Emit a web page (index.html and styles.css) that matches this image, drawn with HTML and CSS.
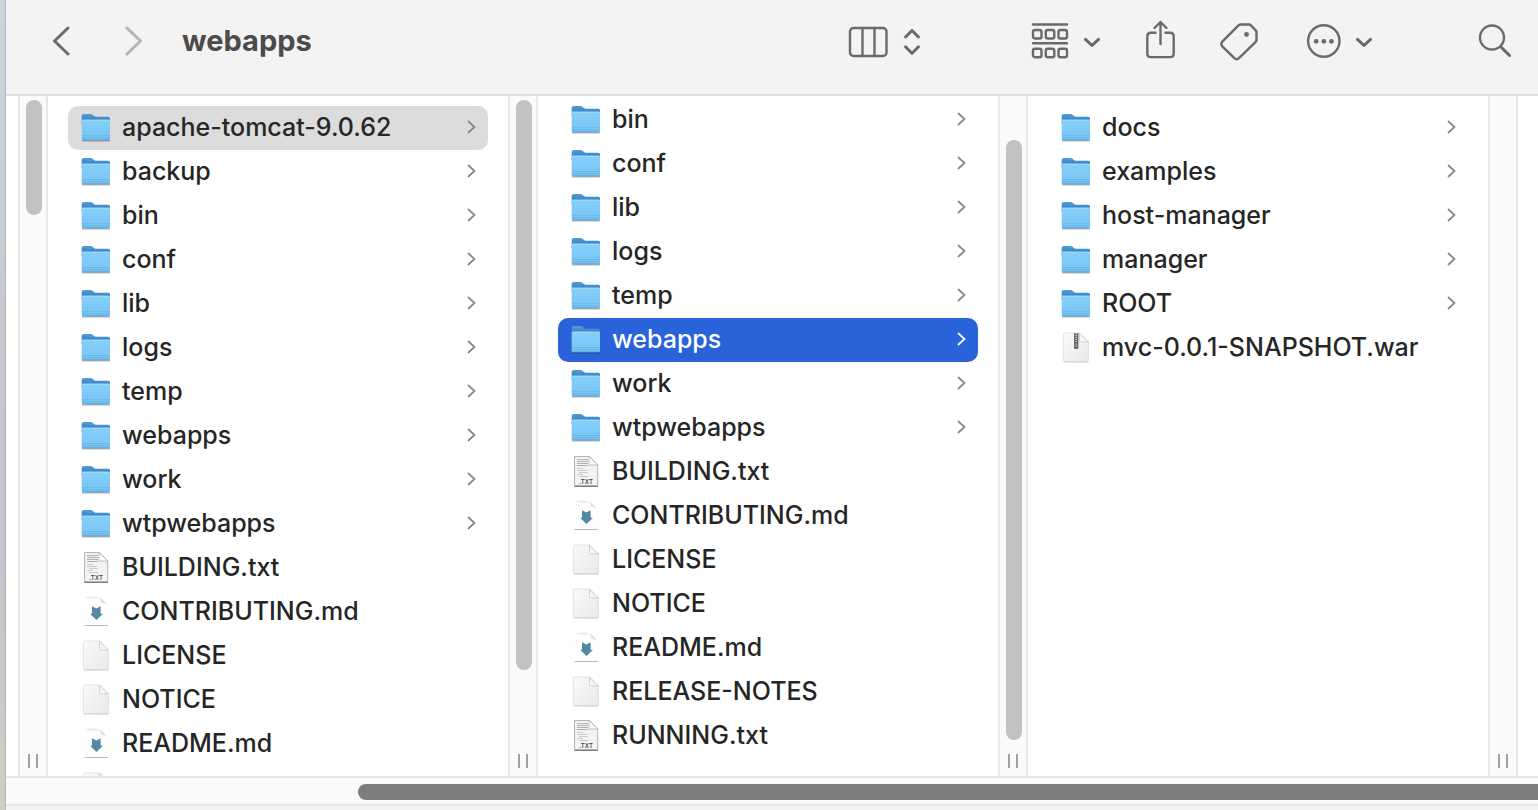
FILE: index.html
```html
<!DOCTYPE html>
<html lang="en">
<head>
<meta charset="utf-8">
<title>webapps</title>
<link rel="stylesheet" href="styles.css">
</head>
<body>
<svg class="sprites" width="0" height="0" aria-hidden="true">
  <defs>
    <linearGradient id="g-back" x1="0" y1="0" x2="0" y2="1"><stop offset="0" stop-color="#4f9fdc"/><stop offset="1" stop-color="#2c6fb8"/></linearGradient>
    <linearGradient id="g-front" x1="0" y1="0" x2="0" y2="1"><stop offset="0" stop-color="#86cffa"/><stop offset="1" stop-color="#76c3f3"/></linearGradient>
    <linearGradient id="g-page" x1="0" y1="0" x2="1" y2="1"><stop offset="0" stop-color="#fafafa"/><stop offset="1" stop-color="#e9e9e9"/></linearGradient>
    <linearGradient id="g-fold" x1="0" y1="1" x2="1" y2="0"><stop offset="0" stop-color="#ffffff"/><stop offset="1" stop-color="#e2e2e2"/></linearGradient>
  </defs>
  <symbol id="folder" viewBox="0 0 32 32">
    <path d="M2 28h28v1.600H2z" fill="#000" opacity=".25"/>
    <path d="M1.700 4q0-2 2-2h6.800q1.200 0 2 .8l1.500 1.300q.8.700 2 .7h12.300q1.700 0 1.700 1.700V12H1.700z" fill="url(#g-back)"/>
    <path d="M1.700 9q0-1.200 1.300-1.200h25.800q1.200 0 1.200 1.200v17.800q0 1.500-1.500 1.500H3.200q-1.500 0-1.500-1.500z" fill="url(#g-front)"/>
    <path d="M2.200 8.200h27.300" stroke="#a5dcfc" stroke-width="1"/>
    <path d="M1.900 23.500h28M1.900 25.500h28" stroke="#5fb0e4" stroke-width=".6"/>
    <path d="M2.400 28h27" stroke="#4688ba" stroke-width=".7"/>
  </symbol>
  <symbol id="page" viewBox="0 0 32 32">
    <path d="M5 1h14.500L28.500 10v18q0 1.700-1.700 1.700H5q-1.700 0-1.700-1.700V2.700Q3.300 1 5 1z" fill="url(#g-page)" stroke="#dcdcdc" stroke-width=".8"/>
    <path d="M4 30h24.500" stroke="#c6c6c6" stroke-width=".8"/>
    <path d="M19.500 1L28.500 10h-7.500q-1.500 0-1.500-1.500z" fill="url(#g-fold)" stroke="#c8c8c8" stroke-width=".8"/>
  </symbol>
  <symbol id="txt" viewBox="0 0 32 32">
    <path d="M4.500.5h15L27.700 9v21H4.500z" fill="#f3f3f3" stroke="#b4b4b4" stroke-width="1"/>
    <path d="M4.500 30.300h23.300" stroke="#7e7e7e" stroke-width="1.400"/>
    <path d="M7 3.500h11M7 5.500h11M7 7.500h11M7 9.500h11" stroke="#b0b0b0" stroke-width="1.100"/>
    <path d="M7 12.500h6M7 14.500h10M9 16.500h9M7 18.500h6M9 20.500h9" stroke="#cbcbcb" stroke-width="1"/>
    <path d="M19 .5L27.700 9H19z" fill="#fff" stroke="#b0b0b0" stroke-width=".8"/>
  </symbol>
  <symbol id="md" viewBox="0 0 32 32">
    <path d="M5 .5h12q3 0 3.500 4 .5 3 6.500 5.500v19.500H5z" fill="#fefefe"/>
    <path d="M5 .6h12l2 2.400H9z" fill="#ededed"/>
    <path d="M17.500.8Q24 3 27 9.500q-2-2.500-6-3 0-4-3.500-5.700z" fill="#e0e0e0"/>
    <path d="M4.500 29.500h23.500" stroke="#bdbdbd" stroke-width="1"/>
    <path d="M12 10.200l4.300 2.200 4.300-2.200v7.600H23L16.500 24 10 17.800h2z" fill="#5587a6"/>
  </symbol>
  <symbol id="zip" viewBox="0 0 32 32">
    <use href="#page"/>
    <path d="M14 1h4.400v15q0 1-1 1H15q-1 0-1-1z" fill="#666a70"/>
    <path d="M16.200 1v9" stroke="#c9ccd0" stroke-width="1.600" stroke-dasharray="1 1"/>
    <path d="M16.200 11.500v3.500" stroke="#a9adb3" stroke-width="1.200"/>
  </symbol>
  <symbol id="more" viewBox="0 0 10 16"><path d="M2.500 2.500L8.500 8l-6 5.500" fill="none" stroke="currentColor" stroke-width="1.700" stroke-linecap="round"/></symbol>
  <symbol id="down" viewBox="0 0 18 42"><path d="M2.500 19.300L9 25.500l6.500-6.200" fill="none" stroke="currentColor" stroke-width="3" stroke-linecap="round" stroke-linejoin="round"/></symbol>
</svg>

<div class="window">
  <header class="toolbar">
    <button class="tool back" aria-label="Back"><svg width="18" height="42" viewBox="0 0 18 42"><path d="M16 8L2.500 21 16 34"/></svg></button>
    <button class="tool forward" aria-label="Forward"><svg width="18" height="42" viewBox="0 0 18 42"><path d="M2 8l13.500 13L2 34"/></svg></button>
    <h1 class="title">webapps</h1>
    <button class="tool view" aria-label="View as columns">
      <svg width="40" height="42" viewBox="0 0 40 42"><rect x="2" y="8" width="36.500" height="28" rx="3.500"/><path d="M14.500 8v28M26.500 8v28"/></svg>
      <svg width="18" height="42" viewBox="0 0 18 42"><path class="bold" d="M2.500 17L9 10.500l6.500 6.500M2.500 26.800L9 33.300l6.500-6.500"/></svg>
    </button>
    <button class="tool group" aria-label="Group items">
      <svg width="38" height="42" viewBox="0 0 38 42"><path d="M2 4.500h34M2 23.200h34"/><rect x="2" y="10" width="8.500" height="8.500" rx="2"/><rect x="14.800" y="10" width="8.500" height="8.500" rx="2"/><rect x="27.500" y="10" width="8.500" height="8.500" rx="2"/><rect x="2" y="28.800" width="8.500" height="8.500" rx="2"/><rect x="14.800" y="28.800" width="8.500" height="8.500" rx="2"/><rect x="27.500" y="28.800" width="8.500" height="8.500" rx="2"/></svg>
      <svg width="18" height="42"><use href="#down"/></svg>
    </button>
    <button class="tool share" aria-label="Share"><svg width="32" height="42" viewBox="0 0 32 42"><path d="M10.500 12.700H6q-3.700 0-3.700 3.700v17q0 3.700 3.700 3.700h19q3.700 0 3.700-3.700v-17q0-3.700-3.700-3.700h-4.500M15.500 24V2.500M9.500 8l6-6 6 6"/></svg></button>
    <button class="tool tag" aria-label="Edit tags"><svg width="40" height="42" viewBox="0 0 40 42"><path d="M21.500 4.500h8.500q1 0 1.700.7l5 5.200q.8.800.8 1.800V20q0 1-.8 1.800L20 38.200q-2.300 2-4.600 0L3.300 26.300q-2-2.300 0-4.600L19.700 5.200q.8-.7 1.800-.7z"/><circle class="dot" cx="27.500" cy="14.500" r="2.400"/></svg></button>
    <button class="tool actions" aria-label="More actions">
      <svg width="36" height="42" viewBox="0 0 36 42"><circle cx="17.800" cy="21" r="15.700"/><circle class="dot" cx="10.200" cy="21.300" r="2.400"/><circle class="dot" cx="17.800" cy="21.300" r="2.400"/><circle class="dot" cx="25.400" cy="21.300" r="2.400"/></svg>
      <svg width="18" height="42"><use href="#down"/></svg>
    </button>
    <button class="tool search" aria-label="Search"><svg width="34" height="42" viewBox="0 0 34 42"><circle cx="14" cy="17.500" r="12"/><path class="bold" d="M23 27l8.500 8.500"/></svg></button>
  </header>

  <main class="browser">
    <div class="edge"></div>
    <div class="gutter"><div class="track"><div class="thumb" style="height:18%"></div></div><div class="grip"></div></div>
    <ul class="column">
      <li><button class="row current"><svg class="icon"><use href="#folder"/></svg><span class="name">apache-tomcat-9.0.62</span><svg class="chev"><use href="#more"/></svg></button></li>
      <li><button class="row"><svg class="icon"><use href="#folder"/></svg><span class="name">backup</span><svg class="chev"><use href="#more"/></svg></button></li>
      <li><button class="row"><svg class="icon"><use href="#folder"/></svg><span class="name">bin</span><svg class="chev"><use href="#more"/></svg></button></li>
      <li><button class="row"><svg class="icon"><use href="#folder"/></svg><span class="name">conf</span><svg class="chev"><use href="#more"/></svg></button></li>
      <li><button class="row"><svg class="icon"><use href="#folder"/></svg><span class="name">lib</span><svg class="chev"><use href="#more"/></svg></button></li>
      <li><button class="row"><svg class="icon"><use href="#folder"/></svg><span class="name">logs</span><svg class="chev"><use href="#more"/></svg></button></li>
      <li><button class="row"><svg class="icon"><use href="#folder"/></svg><span class="name">temp</span><svg class="chev"><use href="#more"/></svg></button></li>
      <li><button class="row"><svg class="icon"><use href="#folder"/></svg><span class="name">webapps</span><svg class="chev"><use href="#more"/></svg></button></li>
      <li><button class="row"><svg class="icon"><use href="#folder"/></svg><span class="name">work</span><svg class="chev"><use href="#more"/></svg></button></li>
      <li><button class="row"><svg class="icon"><use href="#folder"/></svg><span class="name">wtpwebapps</span><svg class="chev"><use href="#more"/></svg></button></li>
      <li><button class="row"><svg class="icon"><use href="#txt"/><text x="16" y="28" class="txt-tag">.TXT</text></svg><span class="name">BUILDING.txt</span></button></li>
      <li><button class="row"><svg class="icon"><use href="#md"/></svg><span class="name">CONTRIBUTING.md</span></button></li>
      <li><button class="row"><svg class="icon"><use href="#page"/></svg><span class="name">LICENSE</span></button></li>
      <li><button class="row"><svg class="icon"><use href="#page"/></svg><span class="name">NOTICE</span></button></li>
      <li><button class="row"><svg class="icon"><use href="#md"/></svg><span class="name">README.md</span></button></li>
      <li><button class="row" aria-label="Next file"><svg class="icon"><use href="#page"/></svg></button></li>
    </ul>
    <div class="gutter"><div class="track"><div class="thumb" style="height:89%"></div></div><div class="grip"></div></div>
    <ul class="column scrolled">
      <li><button class="row"><svg class="icon"><use href="#folder"/></svg><span class="name">bin</span><svg class="chev"><use href="#more"/></svg></button></li>
      <li><button class="row"><svg class="icon"><use href="#folder"/></svg><span class="name">conf</span><svg class="chev"><use href="#more"/></svg></button></li>
      <li><button class="row"><svg class="icon"><use href="#folder"/></svg><span class="name">lib</span><svg class="chev"><use href="#more"/></svg></button></li>
      <li><button class="row"><svg class="icon"><use href="#folder"/></svg><span class="name">logs</span><svg class="chev"><use href="#more"/></svg></button></li>
      <li><button class="row"><svg class="icon"><use href="#folder"/></svg><span class="name">temp</span><svg class="chev"><use href="#more"/></svg></button></li>
      <li><button class="row selected"><svg class="icon"><use href="#folder"/></svg><span class="name">webapps</span><svg class="chev"><use href="#more"/></svg></button></li>
      <li><button class="row"><svg class="icon"><use href="#folder"/></svg><span class="name">work</span><svg class="chev"><use href="#more"/></svg></button></li>
      <li><button class="row"><svg class="icon"><use href="#folder"/></svg><span class="name">wtpwebapps</span><svg class="chev"><use href="#more"/></svg></button></li>
      <li><button class="row"><svg class="icon"><use href="#txt"/><text x="16" y="28" class="txt-tag">.TXT</text></svg><span class="name">BUILDING.txt</span></button></li>
      <li><button class="row"><svg class="icon"><use href="#md"/></svg><span class="name">CONTRIBUTING.md</span></button></li>
      <li><button class="row"><svg class="icon"><use href="#page"/></svg><span class="name">LICENSE</span></button></li>
      <li><button class="row"><svg class="icon"><use href="#page"/></svg><span class="name">NOTICE</span></button></li>
      <li><button class="row"><svg class="icon"><use href="#md"/></svg><span class="name">README.md</span></button></li>
      <li><button class="row"><svg class="icon"><use href="#page"/></svg><span class="name">RELEASE-NOTES</span></button></li>
      <li><button class="row"><svg class="icon"><use href="#txt"/><text x="16" y="28" class="txt-tag">.TXT</text></svg><span class="name">RUNNING.txt</span></button></li>
    </ul>
    <div class="gutter"><div class="track at-end"><div class="thumb" style="height:93.750%"></div></div><div class="grip"></div></div>
    <ul class="column">
      <li><button class="row"><svg class="icon"><use href="#folder"/></svg><span class="name">docs</span><svg class="chev"><use href="#more"/></svg></button></li>
      <li><button class="row"><svg class="icon"><use href="#folder"/></svg><span class="name">examples</span><svg class="chev"><use href="#more"/></svg></button></li>
      <li><button class="row"><svg class="icon"><use href="#folder"/></svg><span class="name">host-manager</span><svg class="chev"><use href="#more"/></svg></button></li>
      <li><button class="row"><svg class="icon"><use href="#folder"/></svg><span class="name">manager</span><svg class="chev"><use href="#more"/></svg></button></li>
      <li><button class="row"><svg class="icon"><use href="#folder"/></svg><span class="name">ROOT</span><svg class="chev"><use href="#more"/></svg></button></li>
      <li><button class="row"><svg class="icon"><use href="#zip"/></svg><span class="name">mvc-0.0.1-SNAPSHOT.war</span></button></li>
    </ul>
    <div class="gutter"><div class="track"></div><div class="grip"></div></div>
    <div class="edge last"></div>
  </main>

  <div class="hscroll"><div class="hthumb"></div></div>
  <div class="base"></div>
</div>
</body>
</html>
```

FILE: styles.css
```css
* {
  box-sizing: border-box;
}

body {
  margin: 0;
  padding-left: 6px;
  height: 100vh;
  overflow: hidden;
  background: linear-gradient(#ccd6da, #c6cacf 40%, #c7c6ce 70%, #cbd0c2);
  font-family: Inter, "Liberation Sans", sans-serif;
  color: #262626;
}

button {
  border: 0;
  padding: 0;
  background: none;
  font: inherit;
  color: inherit;
}

.sprites {
  position: absolute;
}

.txt-tag {
  font: 600 6px Inter, sans-serif;
  text-anchor: middle;
  fill: #4a4a4a;
}

.window {
  display: flex;
  flex-direction: column;
  height: 100%;
  background: #fff;
  box-shadow: 0 0 2px #8a8a8a;
}

/* Toolbar */

.toolbar {
  display: flex;
  align-items: center;
  padding: 20px 26px 32px 46px;
  background: #f3f3f3;
  border-bottom: 2px solid #dedede;
}

.tool {
  display: flex;
  flex: none;
  gap: 14px;
  color: #6a6a6a;
}

.tool svg {
  fill: none;
  stroke: currentColor;
  stroke-width: 2.4;
  stroke-linecap: round;
  stroke-linejoin: round;
}

.tool .bold {
  stroke-width: 3;
}

.tool .dot {
  fill: currentColor;
  stroke: none;
}

.back svg,
.forward svg {
  stroke-width: 3;
}

.forward {
  margin-left: 55px;
  color: #b4b4b4;
}

.title {
  flex: 1;
  margin: 0 0 0 39px;
  font-size: 29px;
  line-height: 42px;
  font-weight: 700;
  color: #4b4b4b;
}

.view {
  gap: 15px;
}

.group {
  margin-left: 110px;
}

.share {
  margin-left: 44px;
}

.tag {
  margin-left: 42px;
}

.actions {
  gap: 13px;
  margin-left: 47px;
}

.search {
  margin-left: 105px;
}

/* Columns */

.browser {
  display: flex;
  flex: 1;
  min-height: 0;
}

.edge {
  flex: 0 0 12px;
}

.edge.last {
  flex-basis: 20px;
}

.column {
  flex: 1 1 0;
  min-width: 0;
  margin: 0;
  padding: 10px 20px 0;
  overflow: hidden;
  list-style: none;
}

.column.scrolled {
  padding-top: 2px;
}

.row {
  display: flex;
  align-items: center;
  width: 100%;
  height: 44px;
  padding: 0 12px;
  border-radius: 10px;
  font-size: 25px;
  font-weight: 450;
  line-height: 32px;
  text-align: left;
}

.row.current {
  background: #dcdcdc;
}

.row.selected {
  background: #2962d9;
  color: #fff;
  font-weight: 500;
}

.icon {
  flex: none;
  width: 32px;
  height: 32px;
}

.name {
  flex: 1;
  margin-left: 10px;
  padding-bottom: 2px;
  white-space: nowrap;
}

.chev {
  flex: none;
  width: 10px;
  height: 16px;
  margin-bottom: 2px;
  color: #868686;
}

.selected .chev {
  color: #fff;
}

.gutter {
  display: flex;
  flex-direction: column;
  flex: 0 0 30px;
  padding: 4px 4px 8px 6px;
  background: #fafafa;
  border: solid #e8e8e8;
  border-width: 0 2px;
}

.track {
  display: flex;
  flex-direction: column;
  flex: 1;
}

.track.at-end {
  justify-content: flex-end;
}

.thumb {
  width: 16px;
  border-radius: 8px;
  background: #c2c2c2;
}

.grip {
  width: 10px;
  height: 14px;
  margin: 14px 2px 0;
  border: solid #a0a0a0;
  border-width: 0 2px;
}

/* Horizontal scroller */

.hscroll {
  padding: 6px 0 4px 352px;
  background: #fafafa;
  border-top: 2px solid #e6e6e6;
}

.hthumb {
  height: 16px;
  border-radius: 8px 0 0 8px;
  background: #7d7d7d;
}

.base {
  height: 6px;
  border-top: 2px solid #e8e8e8;
  background: #f4f4f4;
}
```
